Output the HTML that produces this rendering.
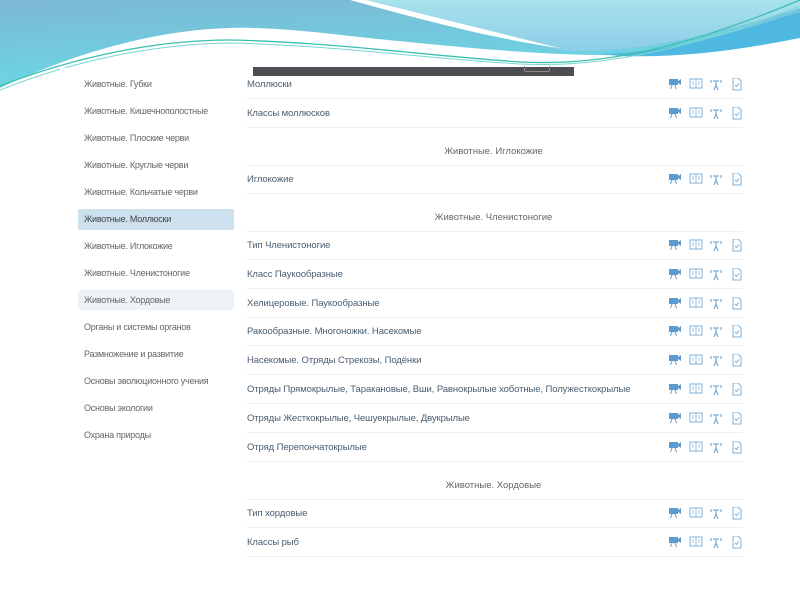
<!DOCTYPE html>
<html><head><meta charset="utf-8"><style>
body{margin:0;width:800px;height:600px;background:#fff;position:relative;overflow:hidden;font-family:"Liberation Sans",sans-serif;}
.t{position:absolute;font-size:9.5px;white-space:nowrap;line-height:12px;}
.l{left:84px;color:#666;font-size:9px;letter-spacing:-0.25px;margin-top:-1px;}
.r{left:247px;color:#4a5d70;letter-spacing:-0.1px;}
.h{left:247px;width:493px;text-align:center;color:#666;}
.hl{position:absolute;left:247px;width:496px;height:1px;background:#eceff2;}
.ic{position:absolute;left:669px;}
</style></head><body>
<svg style="position:absolute;left:0;top:0" width="800" height="110" viewBox="0 0 800 110">
<defs>
<linearGradient id="g1" x1="0" y1="0" x2="0.3" y2="1"><stop offset="0" stop-color="#7cb8d4"/><stop offset="1" stop-color="#6ad8e6"/></linearGradient>
<linearGradient id="g3" x1="0" y1="0" x2="0" y2="1"><stop offset="0" stop-color="#a8e2ea"/><stop offset="1" stop-color="#8ccde8"/></linearGradient>
</defs>
<path d="M0 0H800V0 L800 12 C740 35 680 55 620 55 C560 56 480 50 350 36 C300 30 260 27 230 28 C160 30 80 50 0 88Z" fill="url(#g1)"/>
<path d="M360 0 C430 18 500 36 560 50 C620 55 700 40 800 8 V0Z" fill="url(#g3)"/>
<path d="M350 0 H365 C440 18 510 36 560 48 C500 40 430 22 350 0Z" fill="#fff"/>
<path d="M600 54 C680 52 740 30 800 12 V38 C740 50 680 58 620 56Z" fill="#4fb8e0"/>
<path d="M0 86 C80 55 160 40 230 40 C330 42 420 55 520 62 C600 66 680 50 800 0" stroke="#3cc0b0" stroke-width="1.3" fill="none"/>
<path d="M0 90 C80 58 160 44 230 43 C330 45 420 58 520 64 C600 68 690 50 800 6" stroke="#7ad7d0" stroke-width="1" fill="none"/>
</svg>
<div style="position:absolute;left:60px;top:68px;width:700px;height:500px;background:#fff"></div>
<div style="position:absolute;left:253px;top:67px;width:321px;height:9px;background:#4c4e52"></div>
<div style="position:absolute;left:524px;top:66px;width:24px;height:5px;border:1px solid #888;border-top:none;border-radius:0 0 2px 2px"></div>
<div style="position:absolute;left:78px;top:209px;width:156px;height:21px;background:#cde0ee;border-radius:2px"></div>
<div style="position:absolute;left:78px;top:290px;width:156px;height:20px;background:#eef3f8;border-radius:2px"></div>
<div class="t l" style="top:79px">Животные. Губки</div>
<div class="t l" style="top:106px">Животные. Кишечнополостные</div>
<div class="t l" style="top:133px">Животные. Плоские черви</div>
<div class="t l" style="top:160px">Животные. Круглые черви</div>
<div class="t l" style="top:187px">Животные. Кольчатые черви</div>
<div class="t l" style="top:214px;color:#444">Животные. Моллюски</div>
<div class="t l" style="top:241px">Животные. Иглокожие</div>
<div class="t l" style="top:268px">Животные. Членистоногие</div>
<div class="t l" style="top:295px">Животные. Хордовые</div>
<div class="t l" style="top:322px">Органы и системы органов</div>
<div class="t l" style="top:349px">Размножение и развитие</div>
<div class="t l" style="top:376px">Основы эволюционного учения</div>
<div class="t l" style="top:403px">Основы экологии</div>
<div class="t l" style="top:430px">Охрана природы</div>

<div class="t r" style="top:79px">Моллюски</div><div class="hl" style="top:98px"></div>
<div class="t r" style="top:108px">Классы моллюсков</div><div class="hl" style="top:127px"></div>
<div class="t h" style="top:146px">Животные. Иглокожие</div><div class="hl" style="top:165px"></div>
<div class="t r" style="top:174px">Иглокожие</div><div class="hl" style="top:193px"></div>
<div class="t h" style="top:212px">Животные. Членистоногие</div><div class="hl" style="top:231px"></div>
<div class="t r" style="top:240px">Тип Членистоногие</div><div class="hl" style="top:259px"></div>
<div class="t r" style="top:269px">Класс Паукообразные</div><div class="hl" style="top:288px"></div>
<div class="t r" style="top:298px">Хелицеровые. Паукообразные</div><div class="hl" style="top:317px"></div>
<div class="t r" style="top:326px">Ракообразные. Многоножки. Насекомые</div><div class="hl" style="top:345px"></div>
<div class="t r" style="top:355px">Насекомые. Отряды Стрекозы, Подёнки</div><div class="hl" style="top:374px"></div>
<div class="t r" style="top:384px">Отряды Прямокрылые, Таракановые, Вши, Равнокрылые хоботные, Полужесткокрылые</div><div class="hl" style="top:403px"></div>
<div class="t r" style="top:413px">Отряды Жесткокрылые, Чешуекрылые, Двукрылые</div><div class="hl" style="top:432px"></div>
<div class="t r" style="top:442px">Отряд Перепончатокрылые</div><div class="hl" style="top:461px"></div>
<div class="t h" style="top:480px">Животные. Хордовые</div><div class="hl" style="top:499px"></div>
<div class="t r" style="top:508px">Тип хордовые</div><div class="hl" style="top:527px"></div>
<div class="t r" style="top:537px">Классы рыб</div><div class="hl" style="top:556px"></div>

<svg width="0" height="0" style="position:absolute"><defs>
<g id="icons">
<rect x="0" y="1" width="9" height="6" fill="#5b9bd0"/><path d="M9 3l3-2v6l-3-2z" fill="#5b9bd0"/><path d="M3 7l-1.5 4M6 7l1.5 4" stroke="#5b9bd0" stroke-width="1"/>
<rect x="21" y="1" width="12" height="9" fill="none" stroke="#7fb0d8" stroke-width="1"/><path d="M27 1v9M23 4h2M23 6h2M29 4h2M29 6h2" stroke="#7fb0d8" stroke-width="0.8"/>
<path d="M42 2v3M52 2v3M44 3h6M47 3v4l-2 5M47 7l2 5" stroke="#7fb0d8" stroke-width="1.3" fill="none"/>
<path d="M64 0h5l3 3v9h-8z" fill="none" stroke="#7fb0d8" stroke-width="1"/><path d="M66 7l1.5 1.5 2.5-3" stroke="#7fb0d8" stroke-width="1" fill="none"/>
</g></defs></svg>
<svg class="ic" style="top:78px" width="76" height="13"><use href="#icons"/></svg>
<svg class="ic" style="top:107px" width="76" height="13"><use href="#icons"/></svg>
<svg class="ic" style="top:173px" width="76" height="13"><use href="#icons"/></svg>
<svg class="ic" style="top:239px" width="76" height="13"><use href="#icons"/></svg>
<svg class="ic" style="top:268px" width="76" height="13"><use href="#icons"/></svg>
<svg class="ic" style="top:297px" width="76" height="13"><use href="#icons"/></svg>
<svg class="ic" style="top:325px" width="76" height="13"><use href="#icons"/></svg>
<svg class="ic" style="top:354px" width="76" height="13"><use href="#icons"/></svg>
<svg class="ic" style="top:383px" width="76" height="13"><use href="#icons"/></svg>
<svg class="ic" style="top:412px" width="76" height="13"><use href="#icons"/></svg>
<svg class="ic" style="top:441px" width="76" height="13"><use href="#icons"/></svg>
<svg class="ic" style="top:507px" width="76" height="13"><use href="#icons"/></svg>
<svg class="ic" style="top:536px" width="76" height="13"><use href="#icons"/></svg>
</body></html>
